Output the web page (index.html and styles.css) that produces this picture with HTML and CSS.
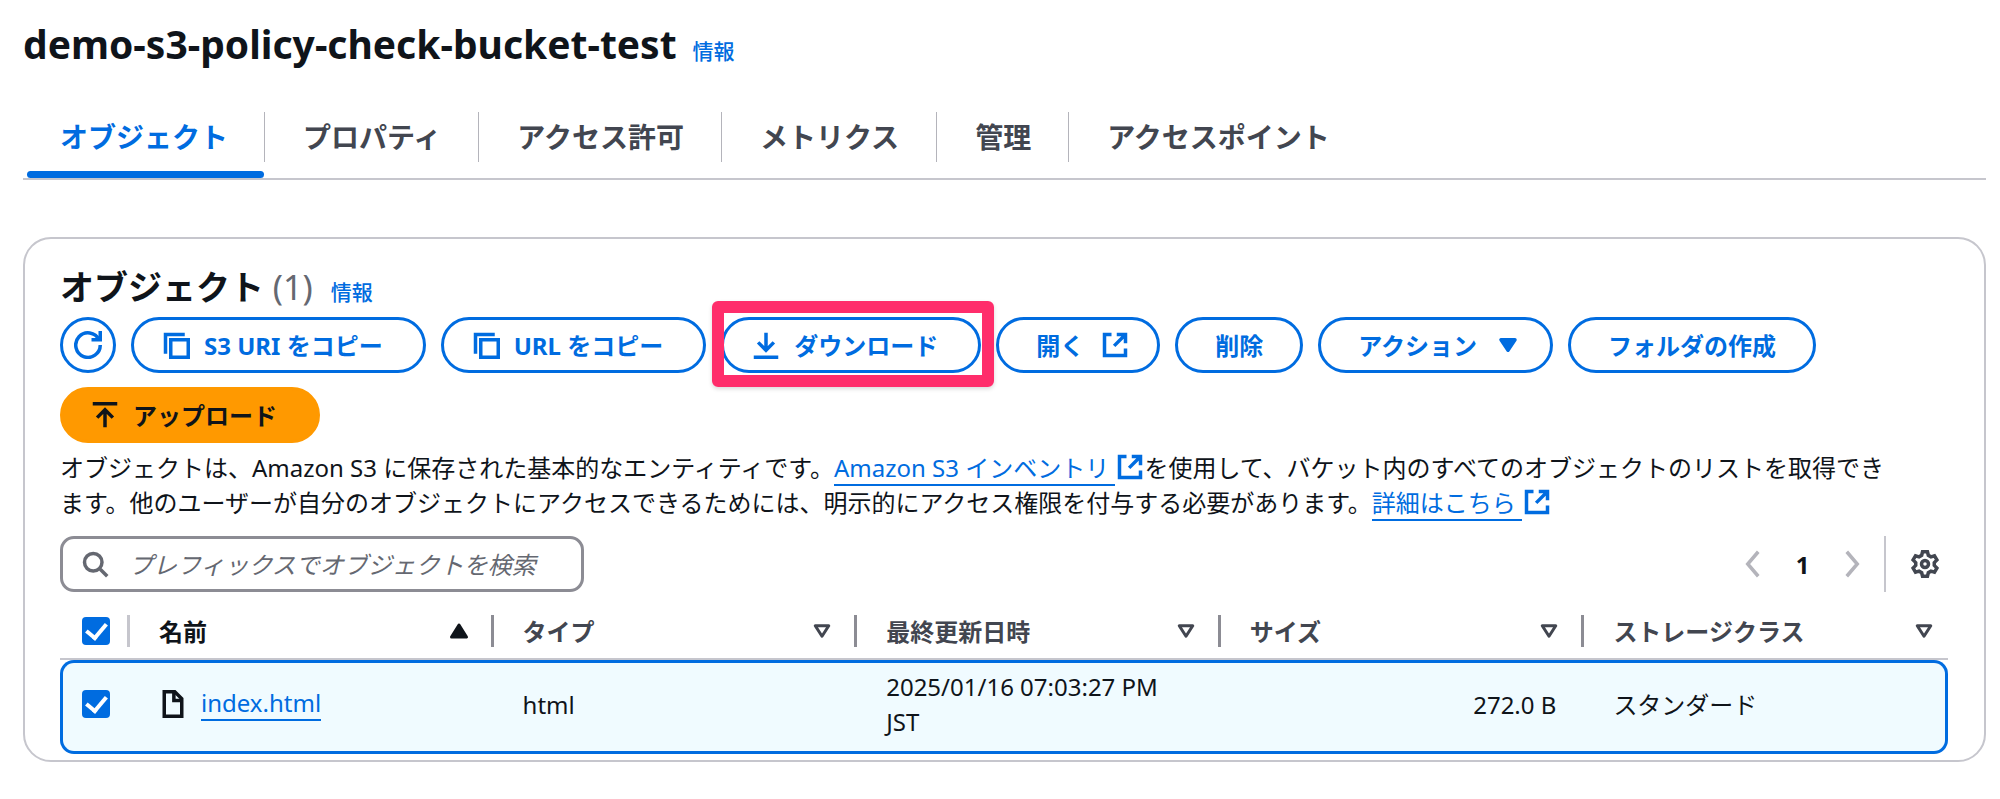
FILE: index.html
```
<!DOCTYPE html>
<html lang="ja">
<head>
  <meta charset="UTF-8" />
  <meta name="viewport" content="width=device-width, initial-scale=1.0"/>
  <title>demo-s3-policy-check-bucket-test</title>
  <link rel="stylesheet" href="styles.css">
</head>
<body>
  <header class="page-header">
    <h1>demo-s3-policy-check-bucket-test</h1>
    <a class="info" href="#">情報</a>
  </header>

  <nav class="tabs">
    <a class="tab active" href="#"><span>オブジェクト</span></a>
    <a class="tab" href="#"><span>プロパティ</span></a>
    <a class="tab" href="#"><span>アクセス許可</span></a>
    <a class="tab" href="#"><span>メトリクス</span></a>
    <a class="tab" href="#"><span>管理</span></a>
    <a class="tab" href="#"><span>アクセスポイント</span></a>
  </nav>

  <main class="card">
    <div class="card-title">
      <h2>オブジェクト <span class="count">(1)</span></h2>
      <a class="info" href="#">情報</a>
    </div>

    <div class="actions">
      <button class="btn round" aria-label="更新">
        <svg class="icon" viewBox="0 0 16 16"><path d="M10 5h5V0"/><path d="M15 8a7 7 0 1 1-.7-3"/></svg>
      </button>
      <button class="btn icon-left">
        <svg class="icon" viewBox="0 0 16 16"><path d="M2 13V2h11"/><path d="M5 5h10v10H5z"/></svg>
        S3 URI をコピー
      </button>
      <button class="btn icon-left">
        <svg class="icon" viewBox="0 0 16 16"><path d="M2 13V2h11"/><path d="M5 5h10v10H5z"/></svg>
        URL をコピー
      </button>
      <div class="highlight">
        <button class="btn icon-left">
          <svg class="icon" viewBox="0 0 16 16"><path d="M8 1v10M3.500 6.500 8 11l4.500-4.500M1 15h14"/></svg>
          ダウンロード
        </button>
      </div>
      <button class="btn icon-right">
        開く
        <svg class="icon" viewBox="0 0 16 16"><path d="M9 2h5v5M7.500 8.500 14 2M6 2H2v12h12v-4"/></svg>
      </button>
      <button class="btn">削除</button>
      <button class="btn icon-right">
        アクション
        <svg class="icon" viewBox="0 0 16 16"><path class="fill" d="M4 5h8l-4 6z"/></svg>
      </button>
      <button class="btn">フォルダの作成</button>
      <button class="btn primary icon-left">
        <svg class="icon" viewBox="0 0 16 16"><path d="M8 15V5M3.500 9.500 8 5l4.500 4.500M1 1.500h14"/></svg>
        アップロード
      </button>
    </div>

    <p class="description">オブジェクトは、Amazon S3 に保存された基本的なエンティティです。<a class="link" href="#">Amazon S3 インベントリ </a><svg class="icon ext" viewBox="0 0 16 16"><path d="M9 2h5v5M7.500 8.500 14 2M6 2H2v12h12v-4"/></svg>を使用して、バケット内のすべてのオブジェクトのリストを取得できます。他のユーザーが自分のオブジェクトにアクセスできるためには、明示的にアクセス権限を付与する必要があります。<a class="link" href="#">詳細はこちら </a><svg class="icon ext" viewBox="0 0 16 16"><path d="M9 2h5v5M7.500 8.500 14 2M6 2H2v12h12v-4"/></svg></p>

    <div class="tools">
      <label class="search">
        <svg class="icon" viewBox="0 0 16 16"><circle cx="7" cy="7" r="5"/><path d="m11 11 4 4"/></svg>
        <input type="text" placeholder="プレフィックスでオブジェクトを検索" aria-label="プレフィックスでオブジェクトを検索" />
      </label>
      <div class="pagination">
        <button class="page-arrow" aria-label="前のページ"><svg class="icon" viewBox="0 0 16 16"><path d="M11 1 5 8l6 7"/></svg></button>
        <button class="page-number">1</button>
        <button class="page-arrow" aria-label="次のページ"><svg class="icon" viewBox="0 0 16 16"><path d="m5 1 6 7-6 7"/></svg></button>
      </div>
      <button class="settings" aria-label="設定">
        <svg class="icon" viewBox="0 0 16 16"><path d="M6.600 1h2.800l.5 2 1.500.9 2-.6 1.400 2.400-1.500 1.500v1.600l1.500 1.500-1.400 2.400-2-.6-1.500.9-.5 2H6.600l-.5-2-1.500-.9-2 .6-1.400-2.400 1.500-1.500V7.200L1.200 5.700l1.400-2.400 2 .6L6.100 3z"/><circle cx="8" cy="8" r="2"/></svg>
      </button>
    </div>

    <table class="objects">
      <thead>
        <tr>
          <th class="select"><input type="checkbox" aria-label="すべて選択" checked /></th>
          <th class="sorted"><div class="head">名前 <svg class="sort" viewBox="0 0 16 16"><path class="fill" d="m8 4 5 8H3z"/></svg></div></th>
          <th><div class="head">タイプ <svg class="sort" viewBox="0 0 16 16"><path d="M3.500 4.500h9L8 11.500z"/></svg></div></th>
          <th><div class="head">最終更新日時 <svg class="sort" viewBox="0 0 16 16"><path d="M3.500 4.500h9L8 11.500z"/></svg></div></th>
          <th><div class="head">サイズ <svg class="sort" viewBox="0 0 16 16"><path d="M3.500 4.500h9L8 11.500z"/></svg></div></th>
          <th><div class="head">ストレージクラス <svg class="sort" viewBox="0 0 16 16"><path d="M3.500 4.500h9L8 11.500z"/></svg></div></th>
        </tr>
      </thead>
      <tbody>
        <tr>
          <td class="select"><input type="checkbox" aria-label="index.html" checked /></td>
          <td>
            <div class="file">
              <svg class="icon" viewBox="0 0 16 16"><path d="M3 1h6l4 4v10H3z"/><path d="M8.500 1v5H13"/></svg>
              <a class="link" href="#">index.html</a>
            </div>
          </td>
          <td>html</td>
          <td>2025/01/16 07:03:27 PM JST</td>
          <td class="size">272.0 B</td>
          <td>スタンダード</td>
        </tr>
      </tbody>
    </table>
  </main>
</body>
</html>
```
FILE: styles.css
```
* { box-sizing: border-box; }

body {
  margin: 0;
  padding: 18px 14px 36px 23px;
  background: #fff;
  color: #0f141a;
  font-family: "Noto Sans", "Noto Sans CJK JP", sans-serif;
  font-size: 24px;
  line-height: 35px;
}

h1, h2, p { margin: 0; }

button, input { font: inherit; }

button {
  background: none;
  border: none;
  padding: 0;
  color: inherit;
  cursor: pointer;
}

.icon {
  width: 28px;
  height: 28px;
  flex: none;
  fill: none;
  stroke: currentColor;
  stroke-width: 2;
}

.fill { fill: currentColor; stroke-linejoin: round; }

.info {
  color: #006ce0;
  font-size: 21px;
  font-weight: 500;
  text-decoration: none;
}

.link {
  color: #006ce0;
  text-decoration: none;
  border-bottom: 2px solid #006ce0;
}

/* header */
.page-header {
  display: flex;
  align-items: baseline;
  gap: 16px;
}

h1 {
  font-size: 39px;
  line-height: 52px;
}

/* tabs */
.tabs {
  display: flex;
  margin-top: 42px;
  border-bottom: 2px solid #c6c6cd;
}

.tab {
  color: #424650;
  font-size: 28px;
  font-weight: 700;
  line-height: 50px;
  text-decoration: none;
  padding-bottom: 9px;
  border-bottom: 7px solid transparent;
}

.tab span {
  display: block;
  padding: 0 37px 0 38px;
  border-left: 1px solid #b4b4bb;
}

.tab.active {
  position: relative;
  color: #006ce0;
}

.tab.active span {
  padding: 0 36px 0 37px;
  border-left: none;
}

.tab.active::after {
  content: "";
  position: absolute;
  left: 4px;
  right: 0;
  bottom: -7px;
  height: 7px;
  border-radius: 4px;
  background: #006ce0;
}

/* card */
.card {
  margin-top: 57px;
  padding: 26px 36px 6px 35px;
  border: 2px solid #c6c6cd;
  border-radius: 28px;
}

.card-title {
  display: flex;
  align-items: baseline;
  gap: 18px;
}

h2 {
  font-size: 34px;
  line-height: 44px;
}

.count {
  color: #656871;
  font-weight: 400;
}

.actions {
  display: flex;
  flex-wrap: wrap;
  gap: 14px 15px;
  margin-top: 7px;
}

.btn {
  display: flex;
  align-items: center;
  gap: 14px;
  height: 56px;
  padding: 0 37px;
  border: 3px solid #006ce0;
  border-radius: 28px;
  color: #006ce0;
  font-weight: 700;
  white-space: nowrap;
}

.btn.icon-left { padding: 0 40px 0 28px; }
.btn.icon-right { padding-right: 28px; gap: 17px; }

.btn.round {
  width: 56px;
  padding: 0;
  justify-content: center;
}

.btn.primary {
  background: #ff9900;
  border-color: #ff9900;
  color: #0f141a;
}

.highlight { position: relative; }

.highlight::after {
  content: "";
  position: absolute;
  inset: -16px -13px -14px -9px;
  border: 12px solid #ff2d6b;
  border-radius: 6px;
  box-shadow: 0 2px 4px rgba(0, 0, 0, 0.15);
  pointer-events: none;
}

.description {
  margin-top: 7px;
  padding-right: 52px;
}

.icon.ext {
  color: #006ce0;
  margin-left: 1px;
  vertical-align: -4px;
}

/* search and paging */
.tools {
  display: flex;
  align-items: center;
  margin-top: 16px;
}

.search {
  display: flex;
  align-items: center;
  gap: 20px;
  width: 524px;
  height: 56px;
  padding: 0 18px;
  border: 3px solid #8c8c94;
  border-radius: 14px;
  color: #656871;
}

.search input {
  flex: 1;
  min-width: 0;
  padding: 0;
  border: none;
  outline: none;
  background: none;
  color: #0f141a;
}

.search input::placeholder {
  color: #656871;
  font-style: italic;
  opacity: 1;
}

.pagination {
  display: flex;
  align-items: center;
  gap: 28px;
  margin-left: auto;
}

.page-arrow {
  display: flex;
  color: #b4b4bb;
}

.page-number {
  width: 15px;
  font-weight: 700;
}

.settings {
  display: flex;
  align-items: center;
  height: 56px;
  margin-left: 18px;
  padding: 0 9px 0 25px;
  border-left: 2px solid #c6c6cd;
  color: #424650;
}

/* objects table */
.objects {
  width: 100%;
  margin-top: 12px;
  table-layout: fixed;
  border-collapse: separate;
  border-spacing: 0;
}

th {
  height: 56px;
  padding: 0;
  border-bottom: 2px solid #c6c6cd;
  color: #424650;
  text-align: left;
}

th.sorted { color: #0f141a; }

.head {
  display: flex;
  align-items: center;
  justify-content: space-between;
  height: 32px;
  padding: 0 20px 0 29px;
  border-right: 3px solid #8c8c94;
}

th:last-child .head {
  padding-right: 12px;
  border-right: none;
}

.sort {
  width: 24px;
  height: 24px;
  fill: none;
  stroke: currentColor;
  stroke-width: 2;
  stroke-linejoin: round;
}

.select { width: 70px; }

th.select {
  background: linear-gradient(#c6c6cd, #c6c6cd) right center / 3px 32px no-repeat;
}

td {
  height: 94px;
  padding: 6px 28px 12px 29px;
  border: solid #006ce0;
  border-width: 3px 0;
  background: #f0fbff;
  color: #0f141a;
}

th.select { padding: 0 0 0 22px; }

td.select {
  padding: 0 0 6px 19px;
  border-left-width: 3px;
  border-radius: 14px 0 0 14px;
}

td:last-child {
  border-right-width: 3px;
  border-radius: 0 14px 14px 0;
}

.size { text-align: right; }

.file {
  display: flex;
  align-items: center;
  gap: 14px;
}

.file .link { line-height: 32px; }

input[type="checkbox"] {
  display: flex;
  align-items: center;
  justify-content: center;
  appearance: none;
  width: 28px;
  height: 28px;
  margin: 0;
  border-radius: 4px;
  background: #006ce0;
}

input[type="checkbox"]::after {
  content: "";
  width: 9px;
  height: 16px;
  margin-bottom: 4px;
  border: solid #fff;
  border-width: 0 4px 4px 0;
  transform: rotate(40deg);
}
```
